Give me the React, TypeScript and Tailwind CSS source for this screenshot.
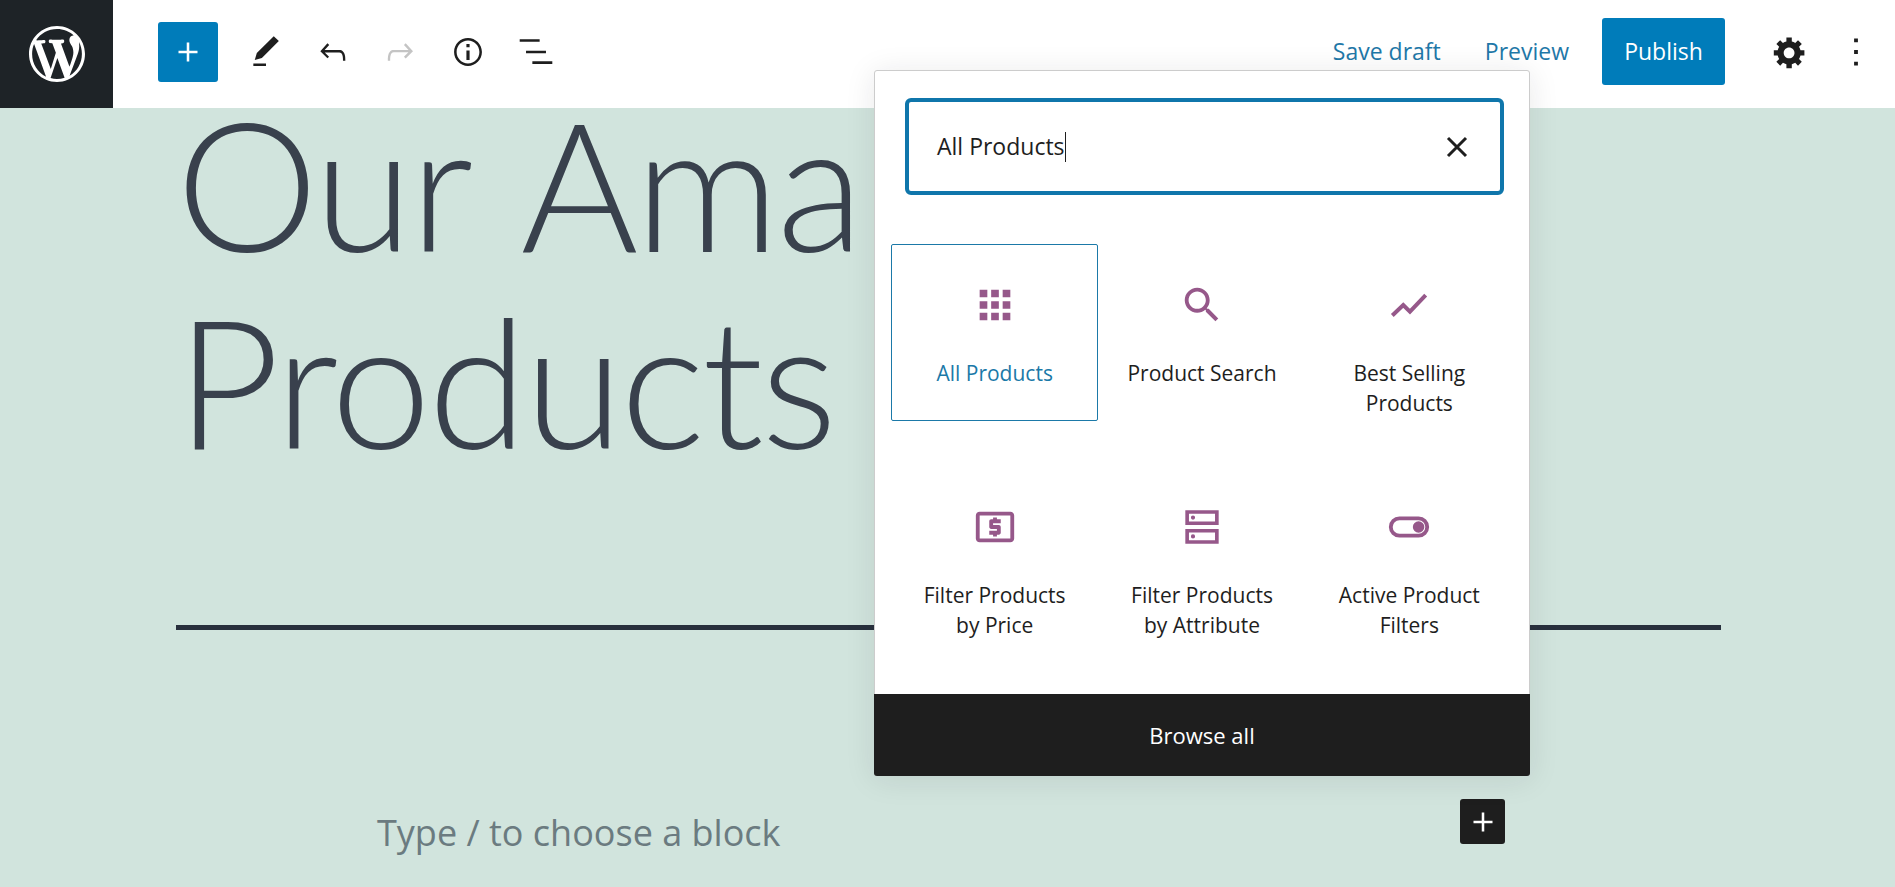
import React from 'react';

const uiFont = "font-['Open_Sans','Noto_Sans',sans-serif]";

const Wp = ({ d, className, box = '0 0 24 24' }: { d: string; className?: string; box?: string }) => (
  <svg viewBox={box} className={className} fill="currentColor">
    <path d={d} />
  </svg>
);

const icons = {
  logo: 'M20 10c0-5.51-4.49-10-10-10C4.48 0 0 4.49 0 10c0 5.52 4.48 10 10 10 5.51 0 10-4.48 10-10zM7.78 15.37L4.37 6.22c.55-.02 1.17-.08 1.17-.08.5-.06.44-1.13-.06-1.11 0 0-1.45.11-2.37.11-.18 0-.37 0-.58-.01C4.12 2.69 6.87 1.11 10 1.11c2.33 0 4.45.87 6.05 2.34-.68-.11-1.65.39-1.65 1.58 0 .74.45 1.36.9 2.1.35.61.55 1.36.55 2.46 0 1.49-1.4 5-1.4 5l-3.03-8.37c.54-.02.82-.17.82-.17.5-.05.44-1.25-.06-1.22 0 0-1.44.12-2.38.12-.87 0-2.33-.12-2.33-.12-.5-.03-.56 1.2-.06 1.22l.92.08 1.26 3.41zM17.41 10c.24-.64.74-1.87.43-4.25.7 1.29 1.05 2.71 1.05 4.25 0 3.29-1.73 6.24-4.4 7.78.97-2.59 1.94-5.2 2.92-7.78zM6.1 18.09C3.12 16.65 1.11 13.53 1.11 10c0-1.3.23-2.48.72-3.59C3.25 10.3 4.67 14.2 6.1 18.09zm4.03-6.63l2.58 6.98c-.86.29-1.76.45-2.71.45-.79 0-1.57-.11-2.29-.33.81-2.38 1.62-4.74 2.42-7.1z',
  plus: 'M18 11.2h-5.2V6h-1.6v5.2H6v1.6h5.2V18h1.6v-5.2H18z',
  pencil: 'M20.1 5.1L16.9 2 6.2 12.7l-1.3 4.4 4.5-1.3L20.1 5.1zM4 20.8h8v-1.5H4v1.5z',
  undo: 'M18.3 11.7c-.6-.6-1.4-.9-2.3-.9H6.7l2.9-3.3-1.1-1-4.5 5L8.5 16l1-1-2.7-2.7H16c.5 0 .9.2 1.3.5 1 1 1 3.4 1 4.5v.3h1.5v-.2c0-1.5 0-4.3-1.5-5.7z',
  redo: 'M15.6 6.5l-1.1 1 2.9 3.3H8c-.9 0-1.7.3-2.3.9-1.4 1.5-1.4 4.2-1.4 5.6v.2h1.5v-.3c0-1.1 0-3.5 1-4.5.3-.3.7-.5 1.3-.5h9.2L14.5 15l1.1 1.1 4.6-4.6-4.6-5z',
  info: 'M12 3.2c-4.8 0-8.8 3.9-8.8 8.8 0 4.8 3.9 8.8 8.8 8.8 4.8 0 8.8-3.9 8.8-8.8 0-4.8-4-8.8-8.8-8.8zm0 16c-4 0-7.2-3.3-7.2-7.2C4.8 8 8 4.8 12 4.8s7.2 3.3 7.2 7.2c0 4-3.2 7.2-7.2 7.2zM11 17h2v-6h-2v6zm0-8h2V7h-2v2z',
  list: 'M1.7 3.9h12.6v1.6H1.7zM5.7 11.2h12.6v1.6H5.7zM9.7 17.9h12.6v1.6H9.7z',
  cog: 'M18 12h-2.18c-.17.7-.44 1.35-.81 1.93l1.54 1.54-2.1 2.1-1.54-1.54c-.58.36-1.23.63-1.91.79V19H8v-2.18c-.68-.16-1.33-.43-1.91-.79l-1.54 1.54-2.12-2.12 1.54-1.54c-.36-.58-.63-1.23-.79-1.91H1V9.03h2.17c.16-.7.44-1.35.8-1.94L2.43 5.55l2.1-2.1 1.54 1.54c.58-.37 1.24-.64 1.93-.81V2h3v2.18c.68.16 1.33.43 1.91.79l1.54-1.54 2.12 2.12-1.54 1.54c.36.59.64 1.24.8 1.94H18V12zm-8.5 1.5c1.66 0 3-1.34 3-3s-1.34-3-3-3-3 1.34-3 3 1.34 3 3 3z',
  dots: 'M10.8 3.5h2.4v2.4h-2.4zM10.8 10.8h2.4v2.4h-2.4zM10.8 18.1h2.4v2.4h-2.4z',
  apps: 'M4 8h4V4H4v4zm6 12h4v-4h-4v4zm-6 0h4v-4H4v4zm0-6h4v-4H4v4zm6 0h4v-4h-4v4zm6-10v4h4V4h-4zm-6 4h4V4h-4v4zm6 6h4v-4h-4v4zm0 6h4v-4h-4v4z',
  search: 'M15.5 14h-.79l-.28-.27C15.41 12.59 16 11.11 16 9.5 16 5.91 13.09 3 9.5 3S3 5.91 3 9.5 5.91 16 9.5 16c1.61 0 3.09-.59 4.23-1.57l.27.28v.79l5 4.99L20.49 19l-4.99-5zm-6 0C7.01 14 5 11.99 5 9.5S7.01 5 9.5 5 14 7.01 14 9.5 11.99 14 9.5 14z',
  money: 'M11 17h2v-1h1c.55 0 1-.45 1-1v-3c0-.55-.45-1-1-1h-3v-1h4V8h-2V7h-2v1h-1c-.55 0-1 .45-1 1v3c0 .55.45 1 1 1h3v1H9v2h2v1zm9-13H4c-1.11 0-1.99.89-1.99 2L2 18c0 1.11.89 2 2 2h16c1.11 0 2-.89 2-2V6c0-1.11-.89-2-2-2zm0 14H4V6h16v12z',
  storage: 'M3.3 3.2h17.4V11H3.3V3.2zm1.9 1.9v4h13.6v-4H5.2zM3.3 13h17.4v7.8H3.3V13zm1.9 1.9v4h13.6v-4H5.2zM6.2 7.1a1.1 1.1 0 1 0 2.2 0 1.1 1.1 0 1 0-2.2 0zM6.2 16.9a1.1 1.1 0 1 0 2.2 0 1.1 1.1 0 1 0-2.2 0z',
  toggle: 'M17 6.5H7a5.5 5.5 0 0 0 0 11h10a5.5 5.5 0 0 0 0-11zm0 9H7a3.5 3.5 0 0 1 0-7h10a3.5 3.5 0 0 1 0 7zM17 9a3 3 0 1 0 0 6 3 3 0 0 0 0-6z',
};

const blocks = [
  { label: 'All Products', icon: icons.apps, active: true },
  { label: 'Product Search', icon: icons.search },
  { label: 'Best Selling Products', icon: 'trend' },
  { label: 'Filter Products by Price', icon: icons.money },
  { label: 'Filter Products by Attribute', icon: icons.storage },
  { label: 'Active Product Filters', icon: icons.toggle },
];

const BlockItem = ({ label, icon, active }: { label: string; icon: string; active?: boolean }) => (
  <div
    className={`h-[177px] flex flex-col items-center pt-[37px] px-6 rounded-[2px] border text-center ${
      active ? 'border-[#1b79a8] text-[#1b79a8]' : 'border-transparent text-[#1e1e1e]'
    }`}
  >
    {icon === 'trend' ? (
      <svg viewBox="0 0 24 24" className="w-[46px] h-[46px] text-[#96588a]" fill="none" stroke="currentColor" strokeWidth="2.1">
        <path d="M3.3 17.5l5.7-5.5 3.5 3.5 8.2-8.7" />
      </svg>
    ) : (
      <Wp d={icon} className="w-[46px] h-[46px] text-[#96588a]" />
    )}
    <div className="mt-[30px] text-[21px] leading-[30px]">{label}</div>
  </div>
);

export default function App() {
  return (
    <div className={`relative h-[887px] overflow-hidden bg-[#d1e4dd] ${uiFont}`}>
      {/* top bar */}
      <header className="relative z-10 h-[108px] bg-white flex items-center">
        <div className="w-[113px] h-[108px] bg-[#1e2327] flex items-center justify-center text-white">
          <Wp d={icons.logo} box="0 0 20 20" className="w-[56px] h-[56px]" />
        </div>
        <div className="flex-1 flex items-center pb-[5px]">
          <button className="ml-[45px] w-[60px] h-[60px] rounded-[3px] bg-[#007cba] text-white flex items-center justify-center">
            <Wp d={icons.plus} className="w-[38px] h-[38px]" />
          </button>
          <div className="ml-[29px] flex items-center gap-[29px] text-[#1e1e1e]">
            <Wp d={icons.pencil} className="w-[38px] h-[38px]" />
            <Wp d={icons.undo} className="w-[38px] h-[38px]" />
            <Wp d={icons.redo} className="w-[38px] h-[38px] text-[#c4c4c4]" />
            <Wp d={icons.info} className="w-[38px] h-[38px] ml-[1px]" />
            <Wp d={icons.list} className="w-[38px] h-[38px] ml-[1px]" />
          </div>
          <div className="ml-auto flex items-center text-[23px]">
            <span className="text-[#1f78a8]">Save draft</span>
            <span className="ml-[44px] text-[#1f78a8]">Preview</span>
            <button className="ml-[33px] w-[123px] h-[67px] rounded-[3px] bg-[#007cba] text-white">Publish</button>
            <Wp d={icons.cog} box="0 0 20 20" className="ml-[47px] w-[36px] h-[36px] text-[#1e1e1e]" />
            <Wp d={icons.dots} className="ml-[29px] mr-[20px] w-[38px] h-[38px] text-[#1e1e1e]" />
          </div>
        </div>
      </header>

      {/* editor canvas */}
      <main className="pl-[176px] pr-[174px]">
        <h1 className="-mt-[24px] text-[180px] tracking-[-3px] [word-spacing:14px] leading-[197px] font-light text-[#39414d] font-['Lato',sans-serif]">
          Our Ama<br />Products
        </h1>
        <div className="mt-[147px] h-[5px] bg-[#28303d]" />
        <p className="mt-[178px] ml-[201px] text-[36px] leading-[50px] text-[#6b7b80]">Type / to choose a block</p>
      </main>

      {/* floating add button */}
      <button className="absolute left-[1460px] top-[799px] w-[45px] h-[45px] rounded-[3px] bg-[#1e1e1e] text-white flex items-center justify-center">
        <Wp d={icons.plus} className="w-[38px] h-[38px]" />
      </button>

      {/* block inserter popover */}
      <div className="absolute z-20 left-[874px] top-[70px] w-[656px] h-[706px] bg-white border border-[#ccc] rounded-[3px] shadow-[0_3px_30px_rgba(25,30,35,0.1)] flex flex-col text-[#1e1e1e]">
        <div className="ml-[30px] mr-[25px] mt-[27px] h-[97px] border-4 border-[#0f76ab] rounded-[6px] flex items-center pl-[28px] pr-[25px] text-[23px]">
          <span>All Products</span>
          <span className="w-px h-[30px] bg-[#1e1e1e]" />
          <svg viewBox="0 0 24 24" className="ml-auto w-[36px] h-[36px]" fill="none" stroke="currentColor" strokeWidth="2">
            <path d="M6 6l12 12M18 6L6 18" />
          </svg>
        </div>
        <div className="mx-[16px] mt-[49px] grid grid-cols-3 gap-y-[45px] content-start">
          {blocks.map((block) => (
            <BlockItem key={block.label} {...block} />
          ))}
        </div>
        <div className="mt-auto h-[82px] pt-[1px] bg-[#1e1e1e] text-white flex items-center justify-center text-[22px] rounded-b-[3px] -mx-px -mb-px">
          Browse all
        </div>
      </div>
    </div>
  );
}
